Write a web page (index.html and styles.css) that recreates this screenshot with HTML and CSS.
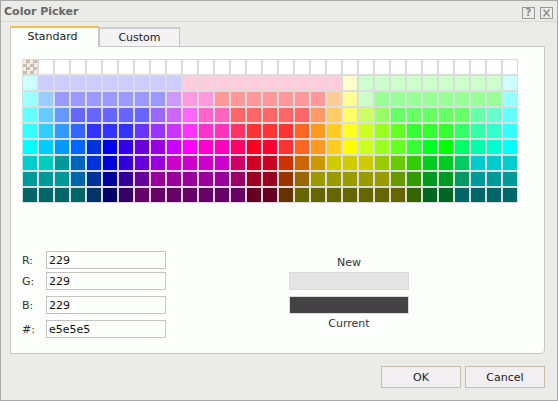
FILE: index.html
```html
<!DOCTYPE html>
<html>
<head>
	<meta charset="UTF-8">
	<title>Color Picker</title>
	<link rel="stylesheet" href="styles.css">
</head>
<body>
	<div class="dialog">
		<div class="titlebar">
			<span class="title">Color Picker</span>
			<span class="tool tool-help">?</span>
			<span class="tool tool-close">
				<svg width="11" height="10" viewBox="0 0 11 10"><path d="M2.5 1.5 L8.5 8.5 M8.5 1.5 L2.5 8.5" stroke="#8a8a8a" stroke-width="1.3" fill="none"/></svg>
			</span>
		</div>
		<div class="content">
			<div class="tabs">
				<div class="tab active">Standard</div>
				<div class="tab">Custom</div>
			</div>
			<div class="panel">
				<div class="swatches" id="swatches"></div>
				<div class="fields">
					<div class="channels">
						<div class="field"><label>R:</label><input type="text" value="229"></div>
						<div class="field"><label>G:</label><input type="text" value="229"></div>
						<div class="field"><label>B:</label><input type="text" value="229"></div>
						<div class="field"><label>#:</label><input type="text" value="e5e5e5"></div>
					</div>
					<div class="preview">
						<div class="preview-label new-label">New</div>
						<div class="preview-box new-box"></div>
						<div class="preview-box current-box"></div>
						<div class="preview-label current-label">Current</div>
					</div>
				</div>
			</div>
			<div class="buttons">
				<button class="btn">OK</button>
				<button class="btn">Cancel</button>
			</div>
		</div>
	</div>
	<script>
		// palette rows, 31 colours each (short hex)
		const rep = (c, n) => Array(n).fill(c);
		const palette = [
			[''].concat(rep('fff', 30)),
			['cff'].concat(rep('ccf', 9), rep('fcd', 10), ['ffc'], rep('cfc', 9), ['cff']),
			['9ff', '9cf'].concat(rep('99f', 7), ['c9f', 'f9d', 'f9d'], rep('f99', 7), ['fc9', 'ff9', 'cfc'], rep('9f9', 8), ['9ff']),
			['6ff', '6cf', '69f'].concat(rep('66f', 5), ['96f', 'c6f', 'f6f', 'f6c', 'f6b'], rep('f66', 5), ['f96', 'fc6', 'ff6', 'cf6', '9f6'], rep('6f6', 5), ['6fa', '6fc', '6ff']),
			['3ff', '3cf', '39f', '36f'].concat(rep('33f', 3), ['63f', '93f', 'c3f', 'f3f', 'f3c', 'f3b', 'f36'], rep('f33', 3), ['f62', 'f92', 'fc2', 'ff2', 'cf2', '9f2', '6f2'], rep('3f3', 3), ['3f6', '3fa', '3fc', '3ff']),
			['0ff', '0cf', '09f', '06f', '03d', '00e', '30e', '60d', '90d', 'c0f', 'f0f', 'f0c', 'f0b', 'f06', 'f02', 'f03', 'f33', 'f62', 'f92', 'fc2', 'ff0', 'cf2', '9f2', '6f2', '3f3', '0f2', '0f0', '0f6', '0fa', '0fc', '0ff'],
			['0cc', '0cb', '099', '06b', '03d', '00d', '30d', '60d', '90d'].concat(rep('c0c', 4), ['c06', 'c02', 'c02', 'c30', 'c60', 'c90', 'cc0', 'cc0', 'cc0', '9c0', '6c0', '3c0', '0c2', '0c2', '0c6', '0cc', '0cc', '0cc']),
			['099', '099', '099', '06a', '039', '009', '309', '609'].concat(rep('909', 5), ['906', '902', '902', '930', '960'], rep('990', 5), ['690', '390', '092', '092', '096', '099', '099', '099']),
			rep('066', 4).concat(['036', '006', '306'], rep('606', 7), ['602', '602', '630'], rep('660', 7), ['360', '062', '062'], rep('066', 4))
		];

		const grid = document.getElementById('swatches');
		palette.forEach(row => {
			row.forEach(c => {
				const cell = document.createElement('div');
				cell.className = 'swatch';
				if (c === '') {
					cell.classList.add('transparent');
				} else {
					cell.style.background = '#' + c;
				}
				grid.appendChild(cell);
			});
		});
	</script>
</body>
</html>
```

FILE: styles.css
```css
/* Basic styles */
body {
	margin: 0;
	font-family: "DejaVu Sans", Verdana, sans-serif;
	font-size: 11px;
	color: #222;
}
.dialog {
	width: 558px;
	height: 401px;
	box-sizing: border-box;
	border: 1px solid #a9a9a9;
	background-color: #ebebe8;
	display: flex;
	flex-direction: column;
}

/* Title bar */
.titlebar {
	height: 20px;
	border-bottom: 1px solid #d6d6d2;
	display: flex;
	align-items: center;
	padding: 0 4px 0 3px;
}
.title {
	flex: 1;
	font-weight: bold;
	color: #666;
	font-size: 11px;
}
.tool {
	width: 13px;
	height: 12px;
	box-sizing: border-box;
	border: 1px solid #999;
	margin-top: 3px;
	display: flex;
	align-items: center;
	justify-content: center;
	color: #888;
	font-size: 10px;
	font-weight: bold;
	line-height: 10px;
}
.tool-close {
	margin-left: 5px;
}

/* Tabs and panel */
.content {
	padding: 4px 12px 0 9px;
}
.tabs {
	display: flex;
	align-items: flex-end;
	height: 20px;
}
.tab {
	width: 81px;
	height: 19px;
	box-sizing: border-box;
	border: 1px solid #c6c6c6;
	border-top: 2px solid #cdcdcd;
	border-bottom: none;
	background-color: #f4f2f5;
	text-align: center;
	line-height: 17px;
	color: #222;
}
.tab.active {
	width: 89px;
	height: 21px;
	margin-bottom: -1px;
	border-top: 2px solid #f3c04e;
	background-color: #fcfefc;
	position: relative;
	z-index: 1;
	line-height: 18px;
	padding-right: 4px;
}
.panel {
	width: 535px;
	height: 308px;
	box-sizing: border-box;
	border: 1px solid #c8c8c8;
	border-radius: 0 0 4px 0;
	background-color: #fcfefc;
	padding: 12px 0 0 11px;
}

/* Colour grid */
.swatches {
	display: grid;
	grid-template-columns: repeat(31, 14px);
	grid-auto-rows: 14px;
	gap: 2px;
	padding: 1px;
	background-color: #dcdcdc;
	width: max-content;
}
.swatch.transparent {
	background-color: #f2eee8;
	background-image: conic-gradient(#cbbdac 25%, transparent 0 50%, #cbbdac 0 75%, transparent 0);
	background-size: 7px 7px;
}

/* RGB fields and preview */
.fields {
	display: flex;
	margin-top: 48px;
}
.channels {
	width: 144px;
}
.field {
	display: flex;
	align-items: center;
	height: 18px;
}
.field + .field {
	margin-top: 6px;
}
.field:nth-child(2) {
	margin-top: 3px;
}
.field label {
	width: 24px;
	color: #333;
}
.field input {
	width: 120px;
	height: 18px;
	box-sizing: border-box;
	border: 1px solid #c4c4c4;
	padding: 0 2px;
	margin: 0;
	font-family: inherit;
	font-size: 11px;
	color: #111;
	background-color: #fdfffd;
}
.preview {
	margin-left: 123px;
	width: 120px;
}
.preview-label {
	text-align: center;
	line-height: 16px;
	color: #333;
}
.new-label {
	padding-top: 4px;
}
.preview-box {
	height: 18px;
	box-sizing: border-box;
	border: 1px solid #dcdcdc;
}
.new-box {
	margin-top: 1px;
	background-color: #e5e5e5;
}
.current-box {
	margin-top: 6px;
	background-color: #444244;
}
.current-label {
	margin-top: 2px;
}

/* Buttons */
.buttons {
	display: flex;
	justify-content: flex-end;
	gap: 4px;
	margin-top: 12px;
}
.btn {
	width: 80px;
	height: 22px;
	border: 1px solid #cbbcab;
	background-color: #f1eff2;
	font-family: inherit;
	font-size: 11px;
	color: #222;
	padding: 0;
}
```
